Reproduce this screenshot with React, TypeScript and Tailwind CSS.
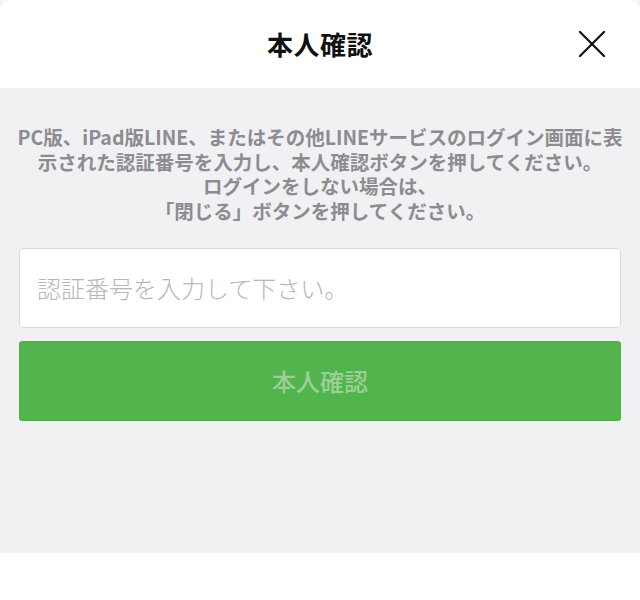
import React from "react";

export default function App() {
  const font = { fontFamily: '"Noto Sans CJK JP", "Noto Sans", sans-serif' };
  return (
    <div className="w-[640px] h-[600px] bg-white flex flex-col" style={font}>
      <div className="bg-[#f5f5f5]">
        <div className="h-[88px] bg-white rounded-t-[12px] grid grid-cols-[1fr_auto_1fr] items-center">
          <div />
          <div className="text-[26px] font-bold text-[#111111] leading-none tracking-[0.5px]">本人確認</div>
          <div className="flex justify-end pr-[34px]">
            <svg width="28" height="28" viewBox="0 0 28 28" fill="none">
              <path d="M2 2 L26 26 M26 2 L2 26" stroke="#111111" strokeWidth="2.2" strokeLinecap="round" />
            </svg>
          </div>
        </div>
      </div>
      <div className="bg-[#f1f1f3] flex flex-col px-[19px] pt-[37px] pb-[132px]">
        <p className="text-[19.5px] leading-[24.5px] font-bold text-[#8c8c91] text-center whitespace-nowrap -mx-[19px]">
          PC版、iPad版LINE、またはその他LINEサービスのログイン画面に表
          <br />
          示された認証番号を入力し、本人確認ボタンを押してください。
          <br />
          ログインをしない場合は、
          <br />
          「閉じる」ボタンを押してください。
        </p>
        <div className="mt-[25px] h-[80px] bg-white border border-[#d9d9dd] rounded-[4px] flex items-center pl-[17px]">
          <span className="text-[24px] font-light text-[#b3b7be] leading-none">認証番号を入力して下さい。</span>
        </div>
        <div className="mt-[13px] h-[80px] bg-[#52b44c] border border-[#4aae44] rounded-[3px] flex items-center justify-center">
          <span className="text-[24px] font-medium text-[#9dd098] leading-none">本人確認</span>
        </div>
      </div>
      <div className="flex-1 bg-white" />
    </div>
  );
}
